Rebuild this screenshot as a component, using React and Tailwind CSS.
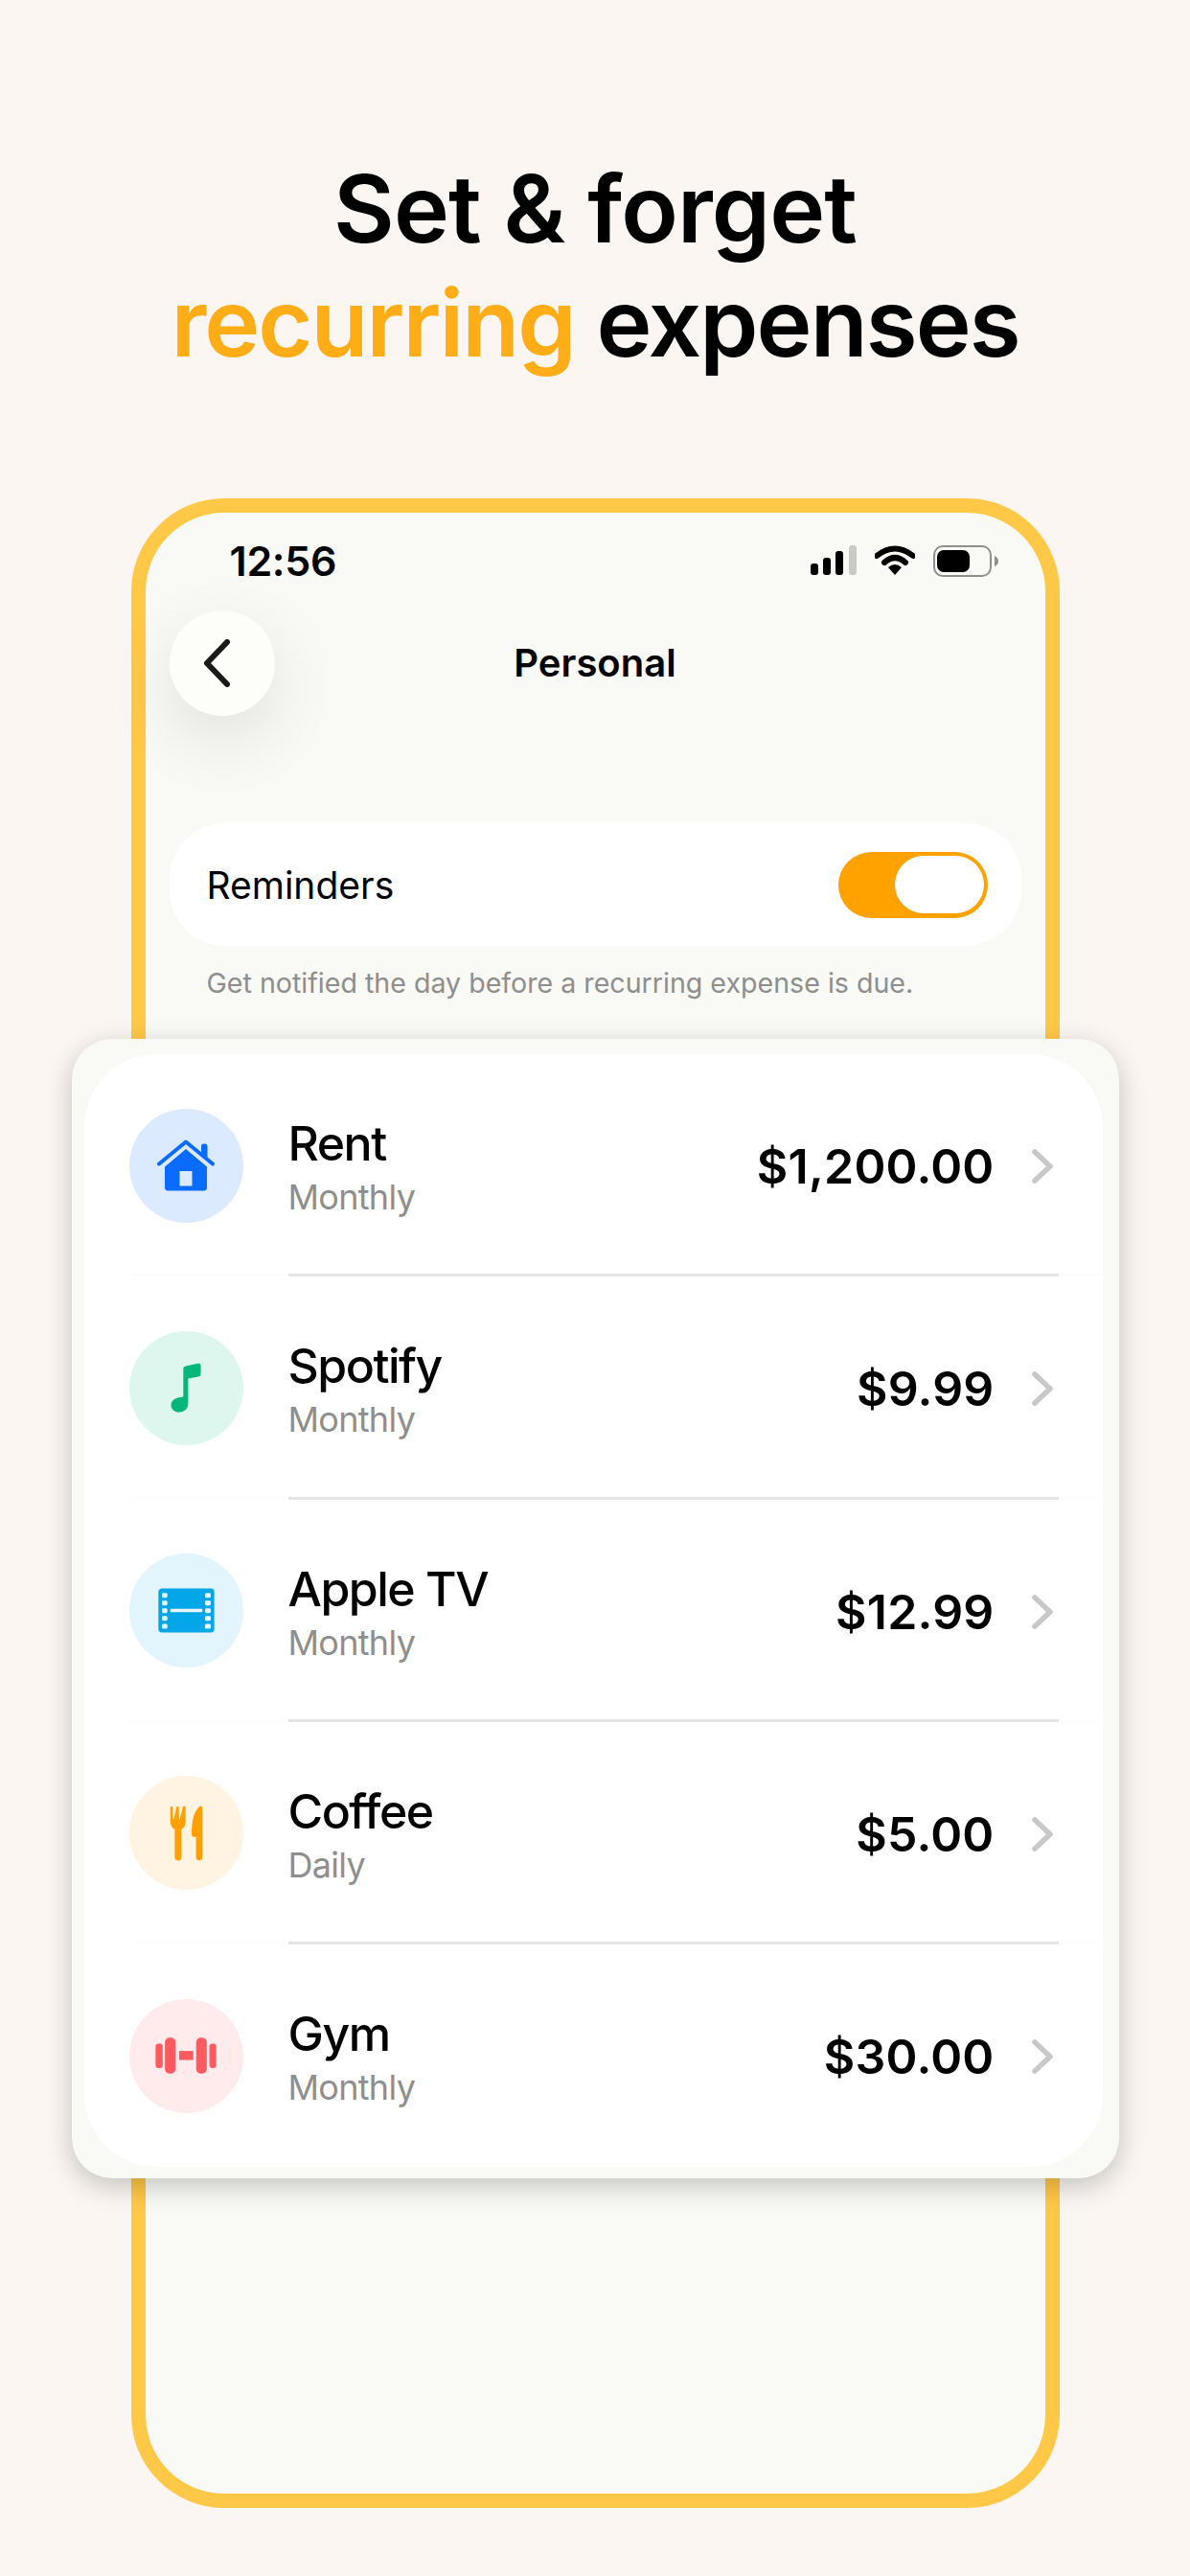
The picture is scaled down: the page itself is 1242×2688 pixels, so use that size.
import React from 'react';

const HomeIcon = () => (
  <svg width="60" height="54" viewBox="0 0 60 54">
    <path d="M2 25.500 L30 2.500 L58 25.500" fill="none" stroke="#0a6cff" strokeWidth="4" strokeLinecap="round" strokeLinejoin="round" />
    <path d="M46 7 a2.500 2.500 0 0 1 2.500 -2.500 h1.500 a2.500 2.500 0 0 1 2.500 2.500 v12 l-6.500 -5.500 z" fill="#0a6cff" />
    <path fillRule="evenodd" d="M30 10 L52 28.500 V50 a3.500 3.500 0 0 1 -3.500 3.500 H11.500 a3.500 3.500 0 0 1 -3.500 -3.500 V28.500 Z M23.500 33 V48.500 H36.500 V33 Z" fill="#0a6cff" />
  </svg>
);

const MusicIcon = () => (
  <svg width="32" height="52" viewBox="204 164 94 154">
    <path d="M243 182 Q243 176 250 174 L288 166 Q297 165 297 173 V200 Q297 206 290 207 L258 213 V290 Q258 316 228 317 A23 21 0 0 1 205 296 Q205 278 226 272 L243 269 Z" fill="#06b77a" />
  </svg>
);

const FilmIcon = () => {
  const rows = [189, 213, 237, 261, 286];
  return (
    <svg width="59" height="47" viewBox="163 174 177 140">
      <rect x="164" y="175" width="175" height="138" rx="12" fill="#03a6e6" />
      {rows.map((y) => (
        <g key={y} fill="#e8f6fd">
          <rect x="175" y={y} width="17" height="15" rx="4" />
          <rect x="310" y={y} width="18" height="15" rx="4" />
        </g>
      ))}
      <rect x="201" y="239" width="101" height="10" rx="3" fill="#e8f6fd" />
    </svg>
  );
};

const ForkIcon = () => (
  <svg width="35" height="58" viewBox="199 163 105 175">
    <path d="M201 170 a4 4 0 0 1 8 0 V204 a2 2 0 0 0 2 2 h0 a2 2 0 0 0 2 -2 L220 170 a4 4 0 0 1 8 0 V204 a2 2 0 0 0 4 0 L240 170 a4.500 4.500 0 0 1 9 0 V212 Q249 232 236 238 V326 a10.500 10.500 0 0 1 -21 0 V238 Q201 232 201 212 Z" fill="#ff9f00" />
    <path d="M302 172 V326 a10 10 0 0 1 -20 0 V262 H276 Q268 262 268 252 Q268 190 292 167 Q302 160 302 172 Z" fill="#ff9f00" />
  </svg>
);

const GymIcon = () => (
  <svg width="64" height="38" viewBox="154 201 190 113">
    <g fill="#ff5a5f">
      <rect x="155" y="220" width="22" height="76" rx="9" />
      <rect x="184" y="202" width="33" height="111" rx="14" />
      <rect x="228" y="243" width="44" height="28" />
      <rect x="281" y="202" width="33" height="111" rx="14" />
      <rect x="322" y="220" width="21" height="76" rx="9" />
    </g>
  </svg>
);

const items = [
  { id: 1, name: "Rent", period: "Monthly", amount: "$1,200.00", circle: "bg-[#dceaff]", Icon: HomeIcon },
  { id: 2, name: "Spotify", period: "Monthly", amount: "$9.99", circle: "bg-[#ddf7ef]", Icon: MusicIcon },
  { id: 3, name: "Apple TV", period: "Monthly", amount: "$12.99", circle: "bg-[#e2f4fc]", Icon: FilmIcon },
  { id: 4, name: "Coffee", period: "Daily", amount: "$5.00", circle: "bg-[#fff3e2]", Icon: ForkIcon },
  { id: 5, name: "Gym", period: "Monthly", amount: "$30.00", circle: "bg-[#ffeaec]", Icon: GymIcon },
];

const StatusIcons = () => (
  <div className="flex items-center">
    <svg width="48" height="32" viewBox="0 0 48 32">
      <rect x="0" y="19" width="8" height="12" rx="3" fill="#000" />
      <rect x="13" y="13" width="8" height="18" rx="3" fill="#000" />
      <rect x="26" y="6" width="8" height="25" rx="3" fill="#000" />
      <rect x="40" y="0" width="8" height="31" rx="3" fill="#c9cac5" />
    </svg>
    <svg className="ml-[19px]" width="42" height="32" viewBox="0 0 42 32">
      <path d="M2 11 Q21 -4 40 11" fill="none" stroke="#000" strokeWidth="6" strokeLinecap="round" />
      <path d="M10 18 Q21 8 32 18" fill="none" stroke="#000" strokeWidth="6" strokeLinecap="round" />
      <path d="M14 23 Q21 17 28 23 L21 31 Z" fill="#000" />
    </svg>
    <div className="ml-[19px] flex items-center">
      <div className="flex h-[33px] w-[61px] items-center rounded-[10px] border-[2px] border-[#8e8e8b] p-[2px]">
        <div className="h-[23px] w-[34px] rounded-[7px] bg-black" />
      </div>
      <svg className="ml-[3px]" width="4" height="11" viewBox="0 0 4 11">
        <path d="M0 0 Q4 2 4 5.500 Q4 9 0 11 Z" fill="#8e8e8b" />
      </svg>
    </div>
  </div>
);

const App = function () {
  return (
    <div className="h-[2688px] w-[1242px] overflow-hidden bg-[#fbf6f2] font-[family-name:Inter,sans-serif] text-black">
      <h1 className="pt-[158px] text-center text-[98px] leading-[119px] font-semibold">
        <span className="tracking-[-0.9px]">Set &amp; forget</span>
        <br />
        <span className="tracking-[-1.900px]"><span className="text-[#ffad17]">recurring</span> expenses</span>
      </h1>

      <div className="mx-auto mt-[124px] h-[2097px] w-[969px] rounded-[97px] border-[15px] border-[#ffc846] bg-[#f9f9f5]">
        <div className="flex h-[80px] items-center justify-between pt-[20px] pr-[49px] pl-[88px]">
          <span className="text-[43px] leading-[48px] font-semibold tracking-[-0.3px]">12:56</span>
          <StatusIcons />
        </div>

        <div className="relative mt-[22px] flex h-[110px] items-center justify-center">
          <div className="absolute top-0 left-[25px] flex h-[110px] w-[110px] items-center justify-center rounded-full bg-[#fdfdfa] shadow-[0_25px_70px_rgba(0,0,0,0.1)]">
            <svg className="mr-[10px]" width="32" height="50" viewBox="0 0 32 50">
              <path d="M26 3 L5 25 L26 47" fill="none" stroke="#1a1a1a" strokeWidth="6" strokeLinecap="round" strokeLinejoin="round" />
            </svg>
          </div>
          <span className="text-[40px] leading-[48px] font-semibold">Personal</span>
        </div>

        <div className="mx-[25px] mt-[112px] flex h-[128px] items-center justify-between rounded-[58px] bg-white pr-[35px] pl-[39px]">
          <span className="mt-[2px] text-[39px] leading-[46px]">Reminders</span>
          <div className="flex h-[69px] w-[156px] items-center justify-end rounded-full bg-[#ffa200] pr-[4px]">
            <div className="h-[60px] w-[93px] rounded-full bg-white" />
          </div>
        </div>
        <p className="mt-[22px] pl-[64px] text-[28.600px] leading-[34px] text-[#8e8e8e]">
          Get notified the day before a recurring expense is due.
        </p>

        <div className="relative mx-[-77px] mt-[41px] h-[1189px] rounded-[42px] bg-[#f9f9f5] pt-[16px] pr-[17px] pb-[12px] pl-[13px] shadow-[0_8px_28px_rgba(0,0,0,0.22)]">
          <div className="rounded-[76px] bg-white pl-[47px]">
            {items.map(({ id, name, period, amount, circle, Icon }, i) => (
              <div key={id} className={`flex h-[232.250px] items-center border-b-[3px] ${i < items.length - 1 ? "border-[#fdfdfb]" : "border-transparent"}`}>
                <div className={`mt-[3px] flex h-[119px] w-[119px] shrink-0 items-center justify-center rounded-full ${circle}`}>
                  <Icon />
                </div>
                <div className={`mr-[46px] mb-[-3px] ml-[47px] flex flex-1 items-center justify-between self-stretch border-b-[3px] ${i < items.length - 1 ? "border-[#e5e5e5]" : "border-transparent"}`}>
                  <div className="mt-[5px]">
                    <p className="text-[50px] leading-[60px] font-medium tracking-[-1.500px]">{name}</p>
                    <p className="mt-[4px] text-[36px] leading-[44px] tracking-[-0.7px] text-[#8e8e8e]">{period}</p>
                  </div>
                  <div className="mt-[5px] flex items-center">
                    <span className="text-[50px] leading-[60px] font-semibold tracking-[0.2px]">{amount}</span>
                    <svg className="mr-[5px] ml-[38px]" width="24" height="38" viewBox="0 0 24 38">
                      <path d="M4 4 L20 19 L4 34" fill="none" stroke="#c8c8c8" strokeWidth="5.500" strokeLinecap="round" strokeLinejoin="round" />
                    </svg>
                  </div>
                </div>
              </div>
            ))}
          </div>
        </div>
      </div>
    </div>
  );
};

export default App;
